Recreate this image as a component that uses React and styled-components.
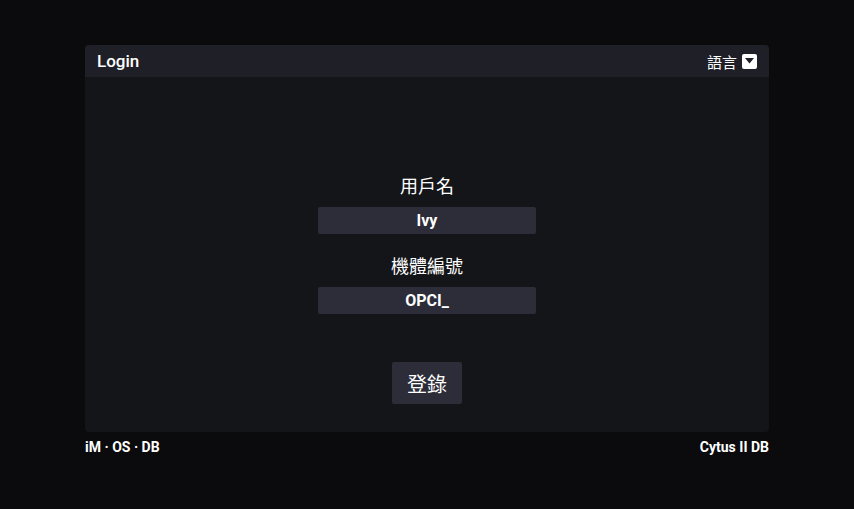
import React, { useState } from 'react'
import styled, { createGlobalStyle } from 'styled-components'

const Global = createGlobalStyle`
    html, body {
        margin: 0;
        padding: 0;
        background: #0b0b0d;
    }
    body {
        font-family: Roboto, "Noto Sans CJK TC", sans-serif;
        color: #ffffff;
    }
`;

const App = () => {
    const [user, setUser] = useState('Ivy');
    const [machine, setMachine] = useState('OPCI_');

    return (
        <Page>
            <Global />
            <Card>
                <Header>
                    <Title>Login</Title>
                    <Lang>
                        語言
                        <Caret>
                            <svg width="9" height="6" viewBox="0 0 9 6">
                                <path d="M0 0 L9 0 L4.5 5.5 Z" fill="#1e1f27" />
                            </svg>
                        </Caret>
                    </Lang>
                </Header>
                <Body>
                    <Field>
                        <Label>用戶名</Label>
                        <Input value={user} onChange={(e) => setUser(e.target.value)} />
                    </Field>
                    <Field>
                        <Label>機體編號</Label>
                        <Input value={machine} onChange={(e) => setMachine(e.target.value)} />
                    </Field>
                    <Button>登錄</Button>
                </Body>
            </Card>
            <Footer>
                <span>iM · OS · DB</span>
                <span>Cytus II DB</span>
            </Footer>
        </Page>
    )
}

export default App

const Page = styled.div`
    width: 684px;
    margin: 0 auto;
    padding-top: 45px;
`;

const Card = styled.div`
    height: 387px;
    background: #141519;
    border-radius: 4px;
    display: flex;
    flex-direction: column;
    overflow: hidden;
`;

const Header = styled.div`
    height: 32px;
    background: #1e1f27;
    display: flex;
    align-items: center;
    justify-content: space-between;
    padding: 0 12px;
`;

const Title = styled.div`
    font-size: 17px;
    font-weight: 500;
`;

const Lang = styled.div`
    display: flex;
    align-items: center;
    gap: 5px;
    font-family: "Noto Sans CJK TC", sans-serif;
    font-size: 15px;
`;

const Caret = styled.span`
    width: 15px;
    height: 15px;
    background: #ffffff;
    border-radius: 2px;
    display: flex;
    align-items: center;
    justify-content: center;
`;

const Body = styled.div`
    flex-grow: 1;
    display: flex;
    flex-direction: column;
    align-items: center;
    padding-top: 96px;
`;

const Field = styled.div`
    display: flex;
    flex-direction: column;
    align-items: center;
    margin-bottom: 19px;
`;

const Label = styled.div`
    font-family: "Noto Sans CJK TC", sans-serif;
    font-size: 18px;
    line-height: 24px;
    margin-bottom: 10px;
`;

const Input = styled.input`
    width: 218px;
    height: 27px;
    box-sizing: border-box;
    border: none;
    outline: none;
    border-radius: 2px;
    background: #2c2d38;
    color: #ffffff;
    text-align: center;
    font-family: Roboto, sans-serif;
    font-weight: 700;
    font-size: 16px;
    padding: 0;
`;

const Button = styled.button`
    margin-top: 29px;
    width: 70px;
    height: 42px;
    border: none;
    border-radius: 2px;
    background: #2c2d38;
    color: #ffffff;
    font-family: "Noto Sans CJK TC", sans-serif;
    font-size: 20px;
    cursor: pointer;
    padding: 0;
`;

const Footer = styled.div`
    display: flex;
    justify-content: space-between;
    padding-top: 7px;
    font-size: 14px;
    font-weight: 700;
    line-height: 16px;
`;
